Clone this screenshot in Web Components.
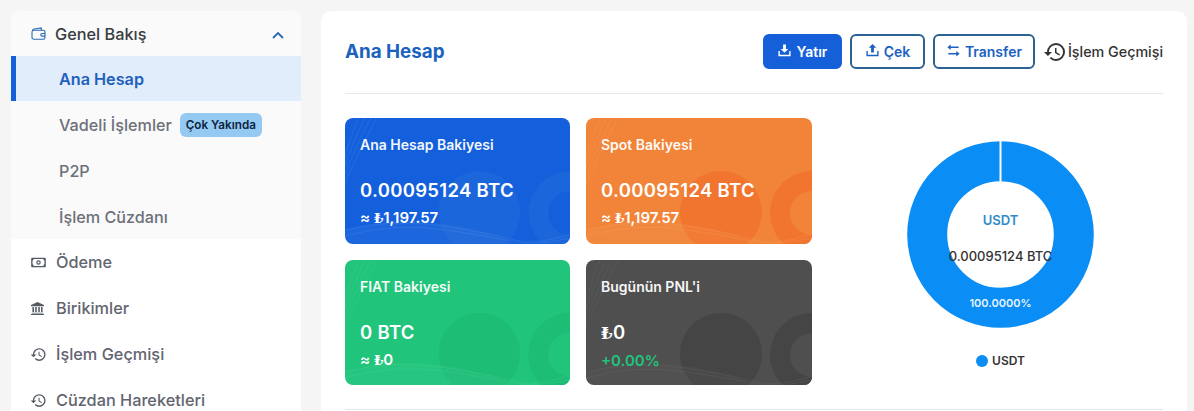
<!DOCTYPE html>
<html lang="tr">
<head>
<meta charset="utf-8">
<title>Ana Hesap</title>
<style>
  html, body { margin: 0; height: 411px; overflow: hidden; background: #f5f5f5; }
  body { font-family: Inter, "Noto Sans", sans-serif; }
</style>
</head>
<body>
<wallet-page>
  <side-menu slot="side">
    <menu-head icon="wallet">Genel Bakış</menu-head>
    <sub-item active>Ana Hesap</sub-item>
    <sub-item badge="Çok Yakında">Vadeli İşlemler</sub-item>
    <sub-item>P2P</sub-item>
    <sub-item>İşlem Cüzdanı</sub-item>
    <menu-link icon="money" slot="links">Ödeme</menu-link>
    <menu-link icon="bank" slot="links">Birikimler</menu-link>
    <menu-link icon="history" slot="links">İşlem Geçmişi</menu-link>
    <menu-link icon="history" slot="links">Cüzdan Hareketleri</menu-link>
  </side-menu>
  <account-panel slot="main">
    <action-btn slot="actions" icon="in" kind="fill" w="79">Yatır</action-btn>
    <action-btn slot="actions" icon="out" w="75">Çek</action-btn>
    <action-btn slot="actions" icon="swap" w="102">Transfer</action-btn>
    <history-link slot="actions">İşlem Geçmişi</history-link>
    <balance-card slot="cards" tone="blue" title="Ana Hesap Bakiyesi" amount="0.00095124 BTC" sub="≈ ₺1,197.57"></balance-card>
    <balance-card slot="cards" tone="orange" title="Spot Bakiyesi" amount="0.00095124 BTC" sub="≈ ₺1,197.57"></balance-card>
    <balance-card slot="cards" tone="green" title="FIAT Bakiyesi" amount="0 BTC" sub="≈ ₺0"></balance-card>
    <balance-card slot="cards" tone="dark" title="Bugünün PNL'i" amount="₺0" sub="+0.00%"></balance-card>
    <donut-chart slot="chart"></donut-chart>
  </account-panel>
</wallet-page>

<script>
const icons = {
  wallet: '<svg viewBox="0 0 16 14" width="15" height="13" fill="none" stroke="#2a6ab5" stroke-width="1.2"><path d="M1.5 4.2C1.5 3 2.3 2.4 3.4 2.2L11 .9v2.6"/><rect x="1" y="3.5" width="14" height="9.7" rx="2"/><path d="M15 7h-3.2a1.4 1.4 0 0 0 0 2.8H15"/></svg>',
  money: '<svg viewBox="0 0 16 12" width="15" height="11" fill="#555b66"><path fill-rule="evenodd" d="M1 .8h14a1 1 0 0 1 1 1v8.400a1 1 0 0 1-1 1H1a1 1 0 0 1-1-1V1.800a1 1 0 0 1 1-1zm1.800 1.500c-.2 1-.7 1.500-1.300 1.700v4c.7.2 1.200.8 1.300 1.700h10.400c.1-.9.6-1.500 1.300-1.700V4c-.6-.2-1.100-.7-1.300-1.700zM8 3.500a2.500 2.500 0 1 1 0 5 2.500 2.500 0 0 1 0-5zm0 1.300a1.200 1.200 0 1 0 0 2.400 1.200 1.200 0 0 0 0-2.400z"/></svg>',
  bank: '<svg viewBox="0 0 14 14" width="13" height="13" fill="#555b66"><path d="M7 0l7 3.300v1.400H0V3.300zM1.500 5.500h1.700v5.300H1.500zm3 0h1.700v5.300H4.500zm3.300 0h1.700v5.300H7.800zm3 0h1.700v5.300h-1.700zM.8 11.500h12.400v1H.8zM0 13h14v1H0z"/></svg>',
  history: '<svg viewBox="0 0 24 24" width="100%" height="100%" fill="currentColor"><path d="M13 3a9 9 0 0 0-9 9H1l3.890 3.890.07.14L9 12H6c0-3.870 3.130-7 7-7s7 3.130 7 7-3.130 7-7 7c-1.930 0-3.680-.79-4.940-2.060l-1.420 1.420A8.954 8.954 0 0 0 13 21a9 9 0 0 0 0-18zm-1 5v5l4.280 2.540.72-1.210-3.500-2.080V8H12z"/></svg>',
  in: '<svg viewBox="0 0 16 16" width="15" height="15" fill="currentColor"><path d="M6.500 1.500h3v5H12L8 10.500 4 6.500h2.500z"/><path d="M1.500 8.500H3v4h10v-4h1.500v5.500h-13z"/></svg>',
  out: '<svg viewBox="0 0 16 16" width="15" height="15" fill="currentColor"><path d="M8 1l4 4H9.500v5h-3V5H4z"/><path d="M1.500 8.500H3v4h10v-4h1.500v5.500h-13z"/></svg>',
  swap: '<svg viewBox="0 0 16 16" width="15" height="15" fill="currentColor"><path d="M5 1.500v2.200h8.500v1.500H5v2.300L1.500 4.500zM11 8.500l3.500 3-3.500 3v-2.300H2.500v-1.500H11z"/></svg>'
};

class WalletPage extends HTMLElement {
  constructor() {
    super();
    this.attachShadow({ mode: 'open' }).innerHTML = `
      <style>
        :host { display: grid; grid-template-columns: 290px 866px; gap: 20px; padding: 11px 0 0 11px; height: 400px; overflow: hidden; }
      </style>
      <slot name="side"></slot>
      <slot name="main"></slot>`;
  }
}

class SideMenu extends HTMLElement {
  constructor() {
    super();
    this.attachShadow({ mode: 'open' }).innerHTML = `
      <style>
        :host { display: block; background: #fff; border-radius: 10px 10px 0 0; overflow: hidden; height: 410px; }
        .group { background: #fafafa; height: 228px; }
      </style>
      <div class="group"><slot></slot></div>
      <slot name="links"></slot>`;
  }
}

class MenuHead extends HTMLElement {
  constructor() {
    super();
    this.attachShadow({ mode: 'open' }).innerHTML = `
      <style>
        :host { display: flex; align-items: center; height: 45px; padding: 0 16px 0 20px; font-size: 16.300px; font-weight: 500; color: #3a3d42; }
        .ico { width: 24px; display: flex; }
        span.t { flex: 1; }
        svg.up { width: 14px; height: 8px; margin-top: 2px; }
      </style>
      <span class="ico">${icons[this.getAttribute('icon')]}</span>
      <span class="t"><slot></slot></span>
      <svg class="up" viewBox="0 0 14 8" fill="none" stroke="#2a6ab5" stroke-width="1.800"><path d="M2 7l5-5 5 5"/></svg>`;
  }
}

class SubItem extends HTMLElement {
  constructor() {
    super();
    const badge = this.getAttribute('badge');
    this.attachShadow({ mode: 'open' }).innerHTML = `
      <style>
        :host { display: flex; align-items: center; height: 46px; padding: 1px 0 0 48px; font-size: 16.200px; font-weight: 500; color: #6d7079; box-sizing: border-box; }
        :host([active]) { height: 45px; background: #e2edfb; color: #1f60bd; font-weight: 600; padding-left: 43px; border-left: 5px solid #1560d8; }
        b { margin-left: 8px; background: #94c9f2; color: #0c2340; font-size: 11.700px; font-weight: 600; line-height: 24px; height: 24px; padding: 0 6px; border-radius: 6px; white-space: nowrap; }
      </style>
      <slot></slot>${badge ? `<b>${badge}</b>` : ''}`;
  }
}

class MenuLink extends HTMLElement {
  constructor() {
    super();
    this.attachShadow({ mode: 'open' }).innerHTML = `
      <style>
        :host { display: flex; align-items: center; height: 46px; padding-left: 20px; font-size: 16.300px; font-weight: 500; color: #62656f; }
        .ico { width: 25px; display: flex; align-items: center; }
        .ico.h span { display: block; width: 17px; height: 17px; margin-left: -1px; color: #555b66; }
      </style>
      ${this.getAttribute('icon') === 'history'
        ? `<span class="ico h"><span>${icons.history}</span></span>`
        : `<span class="ico">${icons[this.getAttribute('icon')]}</span>`}
      <slot></slot>`;
  }
}

class AccountPanel extends HTMLElement {
  constructor() {
    super();
    this.attachShadow({ mode: 'open' }).innerHTML = `
      <style>
        :host { display: block; background: #fff; border-radius: 10px 10px 0 0; padding: 0 24px; height: 410px; box-sizing: border-box; }
        header { display: flex; align-items: center; justify-content: space-between; height: 83px; padding-bottom: 1px; box-sizing: border-box; border-bottom: 1px solid #e7e8e9; }
        h1 { margin: 0; font-size: 18.800px; font-weight: 700; color: #1b62c0; }
        .actions { display: flex; align-items: center; gap: 8px; }
        .body { display: grid; grid-template-columns: 467px 351px; height: 316px; padding-top: 24px; box-sizing: border-box; border-bottom: 1px solid #e7e8e9; }
        .cards { display: grid; grid-template-columns: 225px 226px; grid-template-rows: 126px 125px; gap: 16px; align-content: start; }
      </style>
      <header>
        <h1>Ana Hesap</h1>
        <div class="actions"><slot name="actions"></slot></div>
      </header>
      <div class="body">
        <div class="cards"><slot name="cards"></slot></div>
        <slot name="chart"></slot>
      </div>`;
  }
}

class ActionBtn extends HTMLElement {
  constructor() {
    super();
    this.attachShadow({ mode: 'open' }).innerHTML = `
      <style>
        :host { display: flex; align-items: center; justify-content: center; gap: 4px; height: 35px; box-sizing: border-box; width: ${this.getAttribute('w')}px; border: 2px solid #2a6294; border-radius: 6px; color: #1b62c0; font-size: 14px; font-weight: 600; background: #fff; }
        :host([kind="fill"]) { background: #1560d8; border-color: #1560d8; color: #fff; }
        span { display: flex; margin-top: -3px; }
      </style>
      <span>${icons[this.getAttribute('icon')]}</span><slot></slot>`;
  }
}

class HistoryLink extends HTMLElement {
  constructor() {
    super();
    this.attachShadow({ mode: 'open' }).innerHTML = `
      <style>
        :host { display: flex; align-items: center; color: #333; font-size: 14.300px; font-weight: 500; white-space: nowrap; }
        span { display: block; width: 24px; height: 24px; margin-right: 1px; }
      </style>
      <span>${icons.history}</span><slot></slot>`;
  }
}

const tones = {
  blue: { bg: '#1560dc', deco: '#1c66da', wave: '#6fa6ee' },
  orange: { bg: '#f18438', deco: '#f1762e', wave: '#f9b27c' },
  green: { bg: '#22c47c', deco: '#1fbd76', wave: '#5ddba3' },
  dark: { bg: '#4f4f4f', deco: '#464646', wave: '#7a7a7a' }
};

class BalanceCard extends HTMLElement {
  constructor() {
    super();
    const t = tones[this.getAttribute('tone')];
    const isDark = this.getAttribute('tone') === 'dark';
    const lira = s => s.replace('₺', '<span class="l">₺</span>');
    this.attachShadow({ mode: 'open' }).innerHTML = `
      <style>
        :host { display: flex; flex-direction: column; position: relative; overflow: hidden; border-radius: 8px; background: ${t.bg}; color: #fff; padding: 18px 15px 0; box-sizing: border-box; }
        svg { position: absolute; inset: 0; width: 100%; height: 100%; }
        div { position: relative; white-space: nowrap; }
        .title { font-size: 14px; font-weight: 600; line-height: 18px; opacity: .95; }
        .amount { font-size: 18.500px; font-weight: 600; line-height: 24px; margin-top: 24px; letter-spacing: .3px; }
        .sub { font-size: 15px; font-weight: 600; line-height: 20px; margin-top: 6px; color: ${isDark ? '#22c47c' : '#fff'}; }
        .l { font-family: "DejaVu Serif", serif; font-weight: 700; font-size: .9em; }
      </style>
      <svg viewBox="0 0 226 126" preserveAspectRatio="xMidYMin slice" fill="none">
        <circle cx="135" cy="94" r="41" fill="${t.deco}"/>
        <path fill-rule="evenodd" fill="${t.deco}" d="M226 53a42 42 0 1 1 0 84 42 42 0 0 1 0-84zm0 20a22 22 0 1 0 0 44 22 22 0 0 0 0-44z"/>
        <path d="M0 112Q50 98 100 106T170 126H0z" fill="${t.wave}" opacity=".1"/>
        <g stroke="${t.wave}" stroke-width=".6" opacity=".3">
          <path d="M20 0Q6 30 0 50"/><path d="M26 0Q10 32 0 58"/><path d="M32 0Q14 34 0 66"/><path d="M14 0Q4 24 0 42"/>
          <path d="M0 112Q50 100 100 108T170 122T226 116"/><path d="M0 118Q50 104 102 112T172 124T226 120"/>
        </g>
      </svg>
      <div class="title">${this.getAttribute('title')}</div>
      <div class="amount">${lira(this.getAttribute('amount'))}</div>
      <div class="sub">${lira(this.getAttribute('sub'))}</div>`;
  }
}

class DonutChart extends HTMLElement {
  constructor() {
    super();
    this.attachShadow({ mode: 'open' }).innerHTML = `
      <style>
        :host { display: flex; flex-direction: column; align-items: center; padding: 23px 0 0 26px; }
        .ring { position: relative; width: 187px; height: 187px; }
        svg { display: block; }
        .ring div { position: absolute; left: -10px; right: -10px; text-align: center; white-space: nowrap; }
        .name { top: 71px; color: #2f8cc9; font-size: 13px; font-weight: 600; }
        .val { top: 107px; color: #333; font-size: 13px; font-weight: 500; }
        .pct { top: 155px; color: #e4f3ff; font-size: 11px; font-weight: 600; }
        .legend { display: flex; align-items: center; gap: 4px; margin-top: 25px; font-size: 12px; font-weight: 600; color: #333; }
        .legend i { width: 12px; height: 12px; border-radius: 50%; background: #0a8df5; }
      </style>
      <div class="ring">
        <svg width="187" height="187" viewBox="0 0 187 187">
          <circle cx="93.500" cy="93.500" r="73.300" fill="none" stroke="#0a8df5" stroke-width="40"/>
          <rect x="92.500" y="0" width="2" height="41" fill="#fff"/>
        </svg>
        <div class="name">USDT</div>
        <div class="val">0.00095124 BTC</div>
        <div class="pct">100.0000%</div>
      </div>
      <div class="legend"><i></i>USDT</div>`;
  }
}

customElements.define('wallet-page', WalletPage);
customElements.define('side-menu', SideMenu);
customElements.define('menu-head', MenuHead);
customElements.define('sub-item', SubItem);
customElements.define('menu-link', MenuLink);
customElements.define('account-panel', AccountPanel);
customElements.define('action-btn', ActionBtn);
customElements.define('history-link', HistoryLink);
customElements.define('balance-card', BalanceCard);
customElements.define('donut-chart', DonutChart);
</script>
</body>
</html>
